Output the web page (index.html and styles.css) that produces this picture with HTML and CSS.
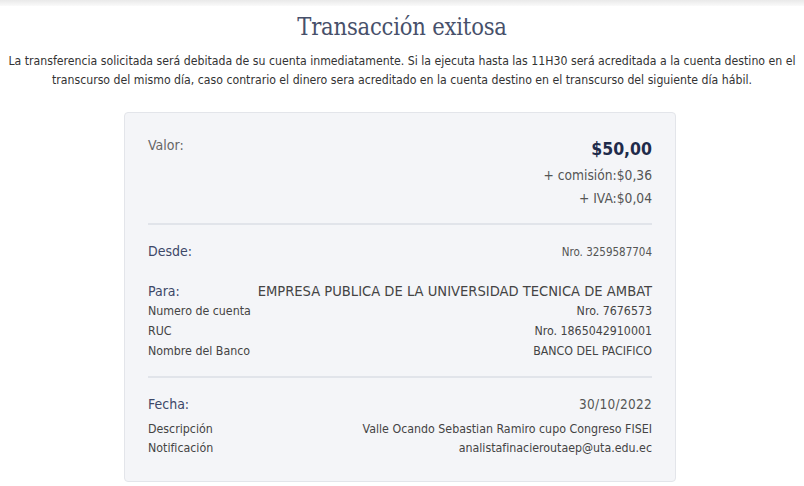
FILE: index.html
```html
<!DOCTYPE html>
<html lang="es">
<head>
<meta charset="utf-8">
<title>Transacción exitosa</title>
<link rel="stylesheet" href="styles.css">
</head>
<body>
<div class="topbar"></div>
<main class="page">
  <h1 class="title">Transacción exitosa</h1>
  <p class="intro">La transferencia solicitada será debitada de su cuenta inmediatamente. Si la ejecuta hasta las 11H30 será acreditada a la cuenta destino en el<br>transcurso del mismo día, caso contrario el dinero sera acreditado en la cuenta destino en el transcurso del siguiente día hábil.</p>
  <section class="card">
    <div class="sec">
      <div class="row row-top">
        <span class="lbl-gray">Valor:</span>
        <span class="amount">$50,00</span>
      </div>
      <div class="fee fee-first">+ comisión:$0,36</div>
      <div class="fee">+ IVA:$0,04</div>
    </div>
    <hr class="divider divider-a">
    <div class="sec">
      <div class="row head">
        <span class="lbl">Desde:</span>
        <span class="val">Nro. 3259587704</span>
      </div>
      <div class="row head para">
        <span class="lbl">Para:</span>
        <span class="val-big">EMPRESA PUBLICA DE LA UNIVERSIDAD TECNICA DE AMBAT</span>
      </div>
      <div class="row small">
        <span>Numero de cuenta</span>
        <span>Nro. 7676573</span>
      </div>
      <div class="row small">
        <span>RUC</span>
        <span>Nro. 1865042910001</span>
      </div>
      <div class="row small">
        <span>Nombre del Banco</span>
        <span>BANCO DEL PACIFICO</span>
      </div>
    </div>
    <hr class="divider divider-b">
    <div class="sec">
      <div class="row head">
        <span class="lbl">Fecha:</span>
        <span class="val-date">30/10/2022</span>
      </div>
      <div class="row small tight first-small">
        <span>Descripción</span>
        <span>Valle Ocando Sebastian Ramiro cupo Congreso FISEI</span>
      </div>
      <div class="row small tight">
        <span>Notificación</span>
        <span>analistafinacieroutaep@uta.edu.ec</span>
      </div>
    </div>
  </section>
</main>
</body>
</html>
```
FILE: styles.css
```css
* { box-sizing: border-box; }
html, body { margin: 0; padding: 0; background: #fff; }
body {
  font-family: "DejaVu Sans Condensed", "Liberation Sans", sans-serif;
  color: #444;
}
.topbar {
  height: 6px;
  background: linear-gradient(#e9e9e9, #fafafa);
}
.page {
  padding: 0 4px;
  display: flex;
  flex-direction: column;
  align-items: center;
}
.title {
  margin: 6px 0 0;
  font-family: "DejaVu Serif Condensed", "DejaVu Serif", serif;
  font-weight: normal;
  font-size: 23.5px;
  line-height: 30px;
  color: #47506a;
  letter-spacing: -0.2px;
}
.intro {
  margin: 10px 0 0;
  font-size: 12.2px;
  line-height: 19px;
  color: #333;
  text-align: center;
  white-space: nowrap;
}
.card {
  margin: 22px 4px 0 0;
  width: 552px;
  background: #f4f5f8;
  border: 1px solid #e3e5ea;
  border-radius: 4px;
  padding: 24px 23px 23px;
  display: flex;
  flex-direction: column;
}
.row {
  display: flex;
  justify-content: space-between;
  align-items: baseline;
}
.row-top { align-items: flex-start; }
.lbl-gray {
  font-size: 14px;
  line-height: 16px;
  color: #666;
}
.amount {
  font-size: 17.5px;
  line-height: 24px;
  font-weight: bold;
  color: #1f2b4b;
}
.fee {
  text-align: right;
  font-size: 13.7px;
  line-height: 23px;
  color: #555;
}
.fee-first { margin-top: 3px; }
.divider {
  border: 0;
  height: 2px;
  background: #e1e4ea;
}
.divider-a { margin: 13px 0 16px; }
.divider-b { margin: 15px 0 16px; }
.head { line-height: 20px; }
.head + .head { margin-top: 19px; }
.lbl {
  font-size: 14px;
  color: #3d4868;
}
.val { font-size: 11.5px; color: #555; }
.val-big { font-size: 14.6px; color: #444; }
.val-date { font-size: 13.5px; color: #555; letter-spacing: 0.3px; }
.small {
  font-size: 12.3px;
  line-height: 20px;
  color: #444;
}
.tight { line-height: 19px; }
.first-small { margin-top: 5.5px; }
```
